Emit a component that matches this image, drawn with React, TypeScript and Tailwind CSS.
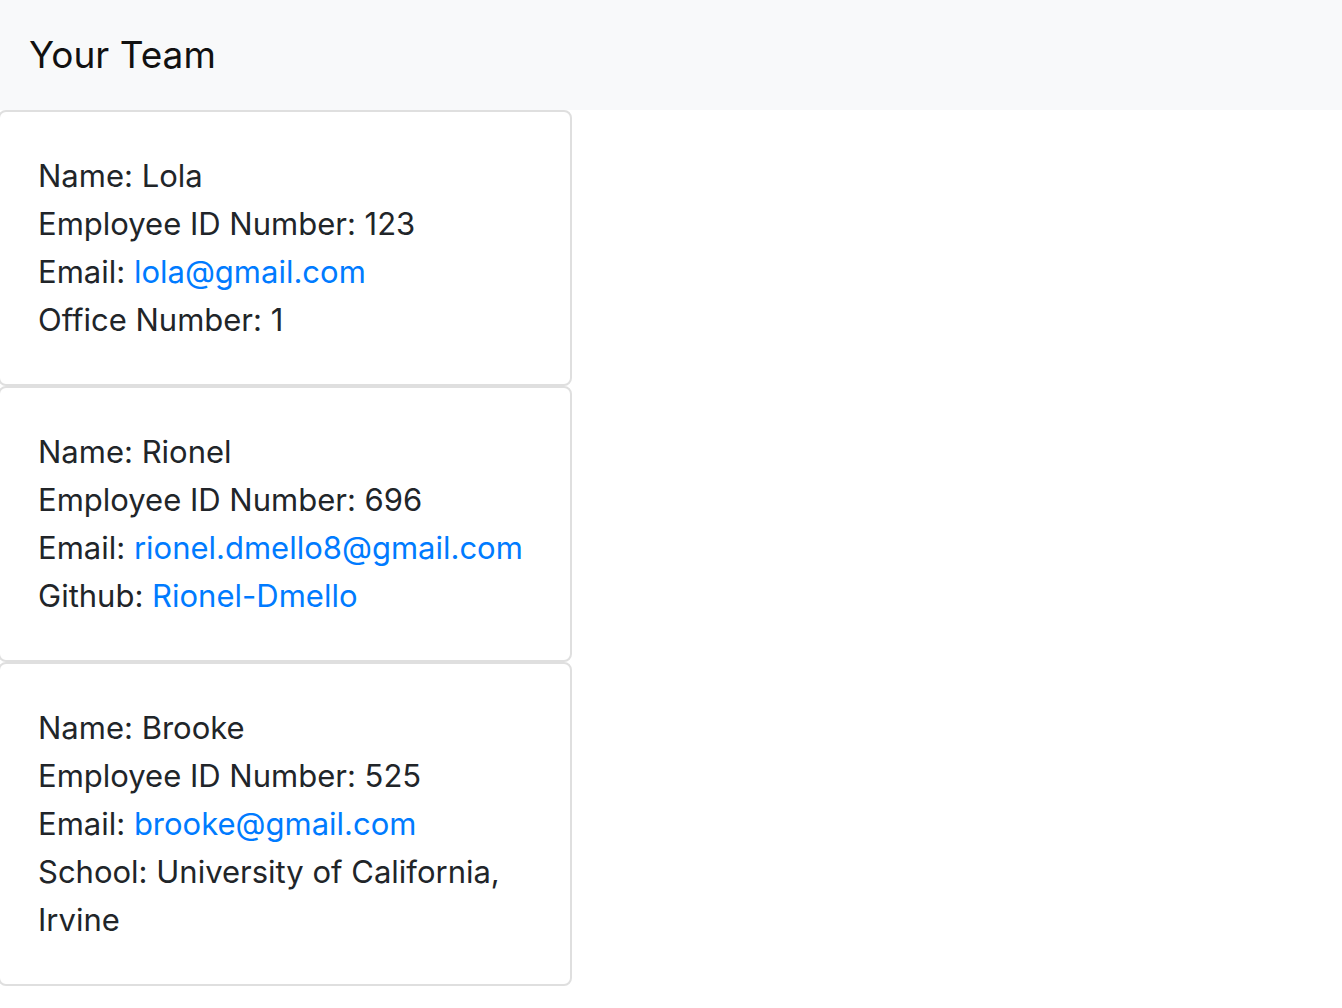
export default function App() {
  const cards = [
    {
      lines: [
        <>Name: Lola</>,
        <>Employee ID Number: 123</>,
        <>Email: <a className="text-[#007bff]" href="#">lola@gmail.com</a></>,
        <>Office Number: 1</>,
      ],
    },
    {
      lines: [
        <>Name: Rionel</>,
        <>Employee ID Number: 696</>,
        <>Email: <a className="text-[#007bff]" href="#">rionel.dmello8@gmail.com</a></>,
        <>Github: <a className="text-[#007bff]" href="#">Rionel-Dmello</a></>,
      ],
    },
    {
      lines: [
        <>Name: Brooke</>,
        <>Employee ID Number: 525</>,
        <>Email: <a className="text-[#007bff]" href="#">brooke@gmail.com</a></>,
        <>School: University of California, Irvine</>,
      ],
    },
  ];
  return (
    <div className="min-h-[1008px] bg-white text-[#212529] font-['Inter','Liberation_Sans',sans-serif] overflow-hidden">
      <div className="h-[110px] bg-[#f8f9fa] flex items-center pl-[29px]">
        <span className="text-[37px] leading-[60px] text-[#111]">Your Team</span>
      </div>
      <div className="flex flex-col">
        {cards.map((c, i) => (
          <div
            key={i}
            className="ml-[-2px] w-[574px] border-2 border-[#dfdfdf] rounded-[8px] pl-[38px] pr-[40px] py-[40px] text-[31px] leading-[48px]"
          >
            {c.lines.map((l, j) => (
              <div key={j}>{l}</div>
            ))}
          </div>
        ))}
      </div>
    </div>
  );
}
